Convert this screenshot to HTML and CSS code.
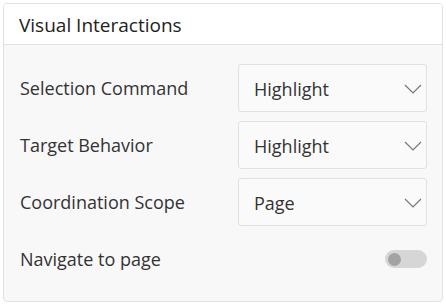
FILE: index.html
```html
<!DOCTYPE html>
<html lang="en">
  <head>
    <meta charset="utf-8" />
    <title>Visual Interactions</title>
    <link rel="stylesheet" href="styles.css">
  </head>
  <body>
    <section class="card">
      <header class="card-head">Visual Interactions</header>
      <div class="card-body">
        <div class="row">
          <span class="label">Selection Command</span>
          <div class="select">
            <span>Highlight</span>
            <svg class="chev" width="18" height="10" viewBox="0 0 18 10"><path d="M1 1 L9 9 L17 1" fill="none" stroke="#777" stroke-width="1.2"/></svg>
          </div>
        </div>
        <div class="row">
          <span class="label">Target Behavior</span>
          <div class="select">
            <span>Highlight</span>
            <svg class="chev" width="18" height="10" viewBox="0 0 18 10"><path d="M1 1 L9 9 L17 1" fill="none" stroke="#777" stroke-width="1.2"/></svg>
          </div>
        </div>
        <div class="row">
          <span class="label">Coordination Scope</span>
          <div class="select">
            <span>Page</span>
            <svg class="chev" width="18" height="10" viewBox="0 0 18 10"><path d="M1 1 L9 9 L17 1" fill="none" stroke="#777" stroke-width="1.2"/></svg>
          </div>
        </div>
        <div class="row">
          <span class="label">Navigate to page</span>
          <div class="toggle"><div class="knob"></div></div>
        </div>
      </div>
    </section>
  </body>
</html>
```
FILE: styles.css
```css
body {
  margin: 3px;
  background: #ffffff;
  font-family: "Open Sans", sans-serif;
  color: #333333;
}

.card {
  width: 438px;
  border: 1px solid #e1e1e1;
  border-radius: 4px;
  overflow: hidden;
  background: #f8f8f8;
}

.card-head {
  height: 41px;
  box-sizing: border-box;
  padding: 1px 15px 0;
  display: flex;
  align-items: center;
  background: #ffffff;
  border-bottom: 1px solid #e1e1e1;
  font-size: 19px;
  color: #222222;
}

.card-body {
  padding: 19px 15px 18px 16px;
  display: flex;
  flex-direction: column;
  gap: 9px;
}

.row {
  height: 48px;
  display: flex;
  align-items: center;
  justify-content: space-between;
}

.label {
  font-size: 18px;
  margin-top: -1px;
}

.select {
  width: 189px;
  height: 48px;
  box-sizing: border-box;
  border: 1px solid #e1e1e1;
  border-radius: 3px;
  background: #fafafa;
  display: flex;
  align-items: center;
  justify-content: space-between;
  padding: 1px 4px 0 15px;
  font-size: 18px;
}

.chev {
  margin-top: 1px;
}

.toggle {
  width: 42px;
  height: 18px;
  border-radius: 9px;
  background: #d6d6d6;
  display: flex;
  align-items: center;
  padding-left: 3px;
  box-sizing: border-box;
}

.knob {
  width: 13px;
  height: 13px;
  border-radius: 50%;
  background: #a3a3a3;
}
```
